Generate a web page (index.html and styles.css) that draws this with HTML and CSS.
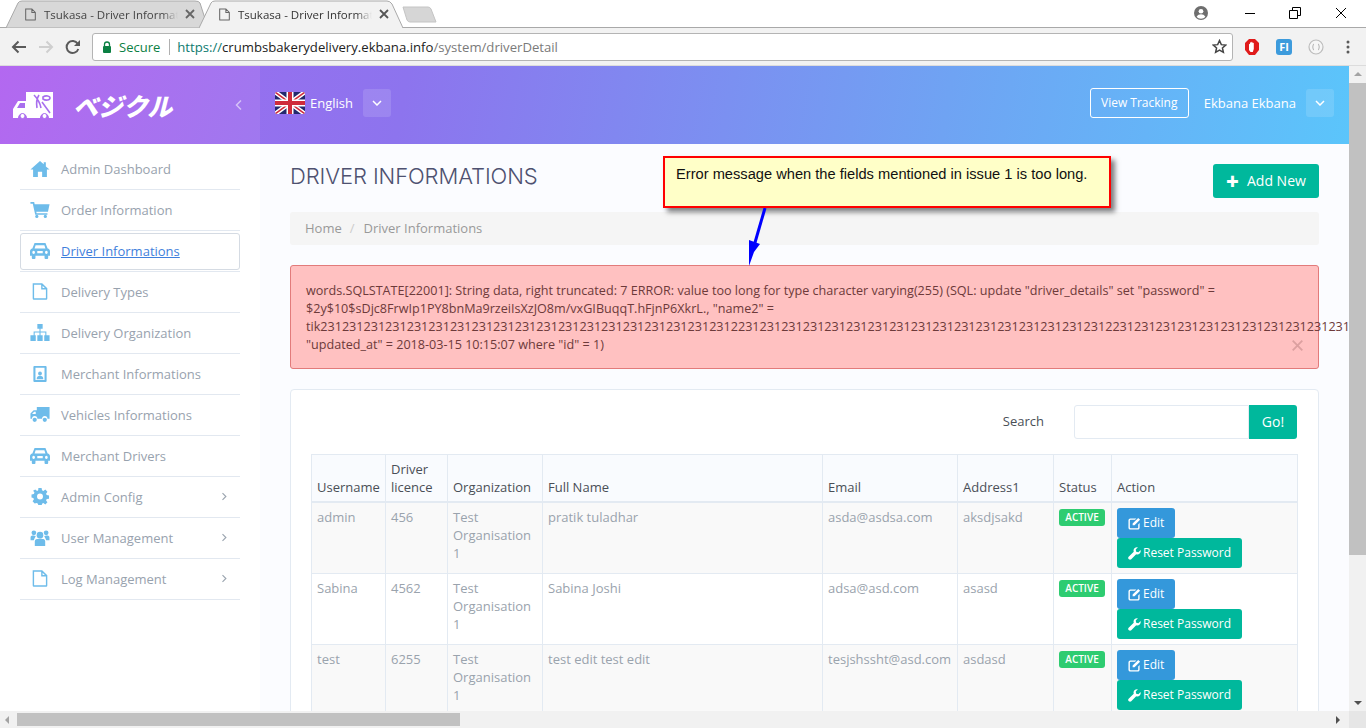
FILE: index.html
```html
<!DOCTYPE html>
<html lang="en">
<head>
    <meta charset="UTF-8">
    <title>Tsukasa - Driver Informations</title>
    <link rel="stylesheet" href="styles.css">
</head>
<body>
<svg class="defs" width="0" height="0">
    <symbol id="i-file" viewBox="0 0 16 18"><path d="M1 1h9l5 5v10.500a.5.5 0 0 1-.5.5H1.500a.5.5 0 0 1-.5-.5z M10 1v5h5" fill="none" stroke="currentColor" stroke-width="1.500"/></symbol>
    <symbol id="i-car" viewBox="0 0 22 16" preserveAspectRatio="none"><path d="M5 1h12l2.400 5c1.600.3 2.600 1.200 2.600 2.600V13h-2v2a1 1 0 0 1-1 1h-2a1 1 0 0 1-1-1v-2H6v2a1 1 0 0 1-1 1H3a1 1 0 0 1-1-1v-2H0V8.600C0 7.200 1 6.300 2.600 6zM6.200 3L5 6h12l-1.200-3zM4 8.200a1.500 1.500 0 1 0 0 3 1.500 1.500 0 0 0 0-3zm14 0a1.500 1.500 0 1 0 0 3 1.500 1.500 0 0 0 0-3zM8 8.500v2h6v-2z" fill="currentColor" fill-rule="evenodd"/></symbol>
    <symbol id="i-chev" viewBox="0 0 8 12"><path d="M2 1.500L6.500 6 2 10.500" fill="none" stroke="currentColor" stroke-width="1.500"/></symbol>
    <symbol id="i-edit" viewBox="0 0 14 14"><path d="M2.500 1.500H9L7.500 3H2.800C2.300 3 2 3.300 2 3.800v7.400c0 .5.300.8.800.8h7.400c.5 0 .8-.3.800-.8V8l1.500-1.500v5c0 1-.9 2-2 2h-8c-1.100 0-2-1-2-2v-8c0-1.100.9-2 2-2z M11 1l2 2-6 6H5V7z" fill="currentColor"/></symbol>
    <symbol id="i-wrench" viewBox="0 0 14 14"><path d="M13.600 3.300c.3 1.400-.1 2.800-1 3.700-1 1-2.500 1.300-3.800.8L3.500 13.300c-.7.700-1.800.7-2.500 0l-.3-.3c-.7-.7-.7-1.800 0-2.500l5.500-5.300C5.700 3.900 6 2.400 7 1.400 8 .4 9.400 0 10.700.4L8.300 2.800l.5 2.400 2.400.5z" fill="currentColor"/></symbol>
</svg>

<div class="tabstrip">
    <div class="tab">
        <svg class="tab-shape" viewBox="0 0 204 28"><path d="M1 28 L13 3 Q14 1 17 1 H190 Q194 1 195 3 L203 28 Z" fill="#d8d8d8" stroke="#a9a9a9"/></svg>
        <svg class="tab-file"><use href="#i-file"/></svg>
        <span class="tab-title">Tsukasa - Driver Informat</span>
        <svg class="tab-x" width="10" height="10" viewBox="0 0 10 10"><path d="M1 1l8 8M9 1L1 9" stroke="#666" stroke-width="1.800"/></svg>
    </div>
    <div class="tab tab-on">
        <svg class="tab-shape" viewBox="0 0 204 28"><path d="M0 28 L12 3 Q13 1 16 1 H188 Q191 1 193 4 L204 28" fill="#f2f2f2" stroke="#a9a9a9"/></svg>
        <svg class="tab-file"><use href="#i-file"/></svg>
        <span class="tab-title">Tsukasa - Driver Informat</span>
        <svg class="tab-x" width="10" height="10" viewBox="0 0 10 10"><path d="M1 1l8 8M9 1L1 9" stroke="#555" stroke-width="1.800"/></svg>
    </div>
    <svg class="tab-new" width="36" height="18" viewBox="0 0 36 18"><path d="M2 1 H27 Q29 1 30 3 L35 16 H9 Q7 16 6 14z" fill="#d6d6d6" stroke="#c4c4c4"/></svg>
    <div class="win-btns">
        <svg class="win-user" width="14" height="14" viewBox="0 0 16 16"><circle cx="8" cy="8" r="8" fill="#6e6e6e"/><circle cx="8" cy="6" r="2.700" fill="#fff"/><path d="M3 12.200c1-2 3-2.900 5-2.900s4 .9 5 2.900c-1 1.300-3 2.300-5 2.300s-4-1-5-2.300z" fill="#fff"/></svg>
        <svg width="12" height="12" viewBox="0 0 12 12" class="win-min"><path d="M1 6.500h10" stroke="#000"/></svg>
        <svg width="12" height="12" viewBox="0 0 12 12" class="win-max"><path d="M.5 3.500h8v8h-8zM3.500 3V.5h8v8H9" fill="none" stroke="#000"/></svg>
        <svg width="12" height="12" viewBox="0 0 12 12" class="win-close"><path d="M1 1l10 10M11 1L1 11" stroke="#000"/></svg>
    </div>
</div>

<div class="toolbar">
    <svg class="nav" width="16" height="14" viewBox="0 0 16 14"><path d="M15 7H2M7.500 1.500L2 7l5.500 5.500" fill="none" stroke="#5a5a5a" stroke-width="2"/></svg>
    <svg class="nav" width="16" height="14" viewBox="0 0 16 14"><path d="M1 7h13M8.500 1.500L14 7l-5.500 5.500" fill="none" stroke="#cfcfcf" stroke-width="2"/></svg>
    <svg class="nav" width="16" height="16" viewBox="0 0 16 16"><path d="M13.300 10a6 6 0 1 1-.6-5.200" fill="none" stroke="#5a5a5a" stroke-width="2"/><path d="M15 1v6H9z" fill="#5a5a5a"/></svg>
    <div class="omnibox">
        <svg class="lock" width="10" height="12" viewBox="0 0 10 12"><path d="M2.500 5V3.500a2.500 2.500 0 0 1 5 0V5" fill="none" stroke="#0b8043" stroke-width="1.300"/><rect x="1" y="5" width="8" height="7" rx="1" fill="#0b8043"/></svg>
        <span class="secure">Secure</span>
        <span class="omni-sep"></span>
        <span class="url"><span class="url-scheme">https://</span>crumbsbakerydelivery.ekbana.info<span class="url-path">/system/driverDetail</span></span>
        <svg class="star" width="15" height="15" viewBox="0 0 24 24"><path d="M12 2.500l2.900 6.500 7.100.7-5.300 4.700 1.500 7-6.200-3.600-6.200 3.600 1.500-7L2 9.700 9.100 9z" fill="none" stroke="#444" stroke-width="2.400"/></svg>
    </div>
    <div class="exts">
        <svg width="16" height="18" viewBox="0 0 16 18"><path d="M5 1h6l4 4v7l-4 5H5l-4-5V5z" fill="#e01b1b"/><path d="M5 12V6.500c0-1 1-1 1-.2V5c0-1 1.200-1 1.200 0V4.500c0-.9 1.300-.9 1.300 0V5.300c0-.8 1.300-.8 1.300 0V11l-1 3H6.500z" fill="#fff"/></svg>
        <span class="ext-fi">FI</span>
        <svg width="16" height="16" viewBox="0 0 16 16"><circle cx="8" cy="8" r="7" fill="#f6f6f6" stroke="#bdbdbd" stroke-width="1.200"/><path d="M6 5C4.800 5 5.400 7.500 4.500 8c.9.500.3 3 1.500 3M10 5c1.200 0 .6 2.500 1.500 3-.9.500-.3 3-1.500 3" fill="none" stroke="#aaa"/></svg>
        <svg class="ext-menu" width="4" height="14" viewBox="0 0 4 14"><circle cx="2" cy="2" r="1.500" fill="#5a5a5a"/><circle cx="2" cy="7" r="1.500" fill="#5a5a5a"/><circle cx="2" cy="12" r="1.500" fill="#5a5a5a"/></svg>
    </div>
</div>

<div class="viewport">
    <div class="page-row">
        <div class="page">
            <header class="topbar">
                <div class="brand">
                    <svg width="42" height="28" viewBox="0 0 42 28"><path d="M14 1h27v26H37a4.500 4.500 0 0 0-9 0H15a4.500 4.500 0 0 0-9 0H1v-9l5-8h8z" fill="#fff"/><path d="M5 17l3-5h5v5z" fill="#a86fee"/><path d="M22 4c3 3 6 8 7 13M27 4c-2 3-3 7-2 13M31 6c3-2 7-1 7 1s-4 3-7 1zM30 11l8 11" fill="none" stroke="#a86fee" stroke-width="1.600"/><circle cx="10.500" cy="25" r="2.500" fill="#fff" stroke="#a86fee"/><circle cx="32.500" cy="25" r="2.500" fill="#fff" stroke="#a86fee"/></svg>
                    <span class="brand-name">ベジクル</span>
                    <svg class="brand-fold" width="8" height="12"><use href="#i-chev" transform="matrix(-1 0 0 1 8 0)"/></svg>
                </div>
                <div class="topbar-main">
                    <svg class="flag" width="30" height="22" viewBox="0 0 60 44">
                        <rect width="60" height="44" rx="3" fill="#23286e"/>
                        <path d="M0 0L60 44M60 0L0 44" stroke="#fff" stroke-width="9"/>
                        <path d="M0 0L60 44M60 0L0 44" stroke="#cf2b3b" stroke-width="3"/>
                        <path d="M30 0v44M0 22h60" stroke="#fff" stroke-width="14"/>
                        <path d="M30 0v44M0 22h60" stroke="#cf2b3b" stroke-width="8"/>
                    </svg>
                    <span class="lang">English</span>
                    <span class="caret-box"><svg width="10" height="6" viewBox="0 0 10 6"><path d="M1 1l4 4 4-4" fill="none" stroke="#fff" stroke-width="1.500"/></svg></span>
                    <a class="track-btn">View Tracking</a>
                    <span class="user-name">Ekbana Ekbana</span>
                    <span class="caret-box"><svg width="10" height="6" viewBox="0 0 10 6"><path d="M1 1l4 4 4-4" fill="none" stroke="#fff" stroke-width="1.500"/></svg></span>
                </div>
            </header>

            <div class="content">
                <nav class="sidebar">
                    <a class="side-item"><svg class="side-icon" viewBox="0 0 18 16"><path d="M9 1l3.500 3V2h2v4L18 9h-2.500v7H11v-5H7v5H2.500V9H0z" fill="currentColor"/></svg>Admin Dashboard</a>
                    <a class="side-item"><svg class="side-icon" viewBox="0 0 18 16"><path d="M0 1h3.500l.5 2h14l-1.500 7H5.500l.3 1.500H16V13H4.500L2.200 2.500H0z" fill="currentColor"/><circle cx="6" cy="14.500" r="1.500" fill="currentColor"/><circle cx="14" cy="14.500" r="1.500" fill="currentColor"/></svg>Order Information</a>
                    <a class="side-item is-active"><span class="side-box"><svg class="side-icon"><use href="#i-car"/></svg><span class="side-link">Driver Informations</span></span></a>
                    <a class="side-item"><svg class="side-icon"><use href="#i-file"/></svg>Delivery Types</a>
                    <a class="side-item"><svg class="side-icon" viewBox="0 0 18 16"><path d="M6.500 0h5v4.500h-2V7H15v3.500h3V16h-5v-5.500h1V8H9.500v2.500H11.500V16h-5v-5.500h2V8H4v2.500h1V16H0v-5.500h3V7h5.500V4.500h-2z" fill="currentColor"/></svg>Delivery Organization</a>
                    <a class="side-item"><svg class="side-icon" viewBox="0 0 18 18"><path d="M3 1h12a1 1 0 0 1 1 1v15a1 1 0 0 1-1 1H3a1 1 0 0 1-1-1V2a1 1 0 0 1 1-1zm1.200 2v13h9.600V3z" fill="currentColor" fill-rule="evenodd"/><circle cx="9" cy="9" r="2" fill="currentColor"/><path d="M5.500 15c0-2.500 1.500-3.500 3.500-3.500s3.500 1 3.500 3.500z" fill="currentColor"/></svg>Merchant Informations</a>
                    <a class="side-item"><svg class="side-icon" viewBox="0 0 18 16"><path d="M6 1h12v11h-2a2.500 2.500 0 0 0-5 0H6.500a2.500 2.500 0 0 0-5 0H0V7l3-3h3zM1.500 7.500H5V5.300H3.500z" fill="currentColor" fill-rule="evenodd"/><circle cx="4" cy="13" r="2" fill="currentColor"/><circle cx="13.500" cy="13" r="2" fill="currentColor"/></svg>Vehicles Informations</a>
                    <a class="side-item"><svg class="side-icon"><use href="#i-car"/></svg>Merchant Drivers</a>
                    <a class="side-item"><svg class="side-icon" viewBox="0 0 16 16"><path fill-rule="evenodd" fill="currentColor" d="M6.500 0h3l.4 2.200 1.300.6L13 1.500l2 2-1.300 1.800.6 1.300 2.200.4v3l-2.200.4-.6 1.300 1.300 1.800-2 2-1.800-1.300-1.300.6-.4 2.200h-3l-.4-2.200-1.300-.6L3 14.500l-2-2 1.300-1.800-.6-1.300L0 9V6l2.200-.4.600-1.300L1.500 2.500l2-1 1.800 1.300 1-.6zM8 5.200a2.800 2.800 0 1 0 0 5.600 2.800 2.800 0 0 0 0-5.600z"/></svg>Admin Config<svg class="side-chev"><use href="#i-chev"/></svg></a>
                    <a class="side-item"><svg class="side-icon" viewBox="0 0 20 18"><circle cx="10" cy="6.500" r="3.500" fill="currentColor"/><circle cx="3.500" cy="4" r="2.500" fill="currentColor"/><circle cx="16.500" cy="4" r="2.500" fill="currentColor"/><path d="M4.500 18v-5c0-2 1.500-2.800 5.500-2.800s5.500.8 5.500 2.800v5zM0 12V9c0-1.500 1-2 3-2l2.500.5C5 9 4 10 3.500 12zM20 12V9c0-1.500-1-2-3-2l-2.500.5c.5 1.500 1.500 2.500 2 4.500z" fill="currentColor"/></svg>User Management<svg class="side-chev"><use href="#i-chev"/></svg></a>
                    <a class="side-item"><svg class="side-icon"><use href="#i-file"/></svg>Log Management<svg class="side-chev"><use href="#i-chev"/></svg></a>
                </nav>

                <main class="main">
                    <div class="page-head">
                        <h1 class="page-title">DRIVER INFORMATIONS</h1>
                        <a class="add-btn"><span class="add-plus">+</span>Add New</a>
                    </div>
                    <div class="crumbs">Home<span class="crumb-sep">/</span>Driver Informations</div>
                    <div class="alert">
                        words.SQLSTATE[22001]: String data, right truncated: 7 ERROR: value too long for type character varying(255) (SQL: update "driver_details" set "password" =<br>
                        $2y$10$sDjc8FrwIp1PY8bnMa9rzeiIsXzJO8m/vxGIBuqqT.hFjnP6XkrL., "name2" =<br>
                        <span class="alert-long">tik2312312312312312312312312312312312312312312312312312312312231231231231231231231231231231231231231231231231231223123123123123123123123123123123123</span><br>
                        "updated_at" = 2018-03-15 10:15:07 where "id" = 1)
                        <svg class="alert-x" width="11" height="11" viewBox="0 0 11 11"><path d="M.7.7l9.600 9.600M10.300.7L.7 10.300" stroke="#dca0a0" stroke-width="1.800"/></svg>
                    </div>
                    <section class="panel">
                        <div class="search-row">
                            <label class="search-label">Search</label>
                            <input class="search-input" type="text">
                            <a class="search-go">Go!</a>
                        </div>
                        <table class="grid">
                            <colgroup><col class="c1"><col class="c2"><col class="c3"><col class="c4"><col class="c5"><col class="c6"><col class="c7"><col class="c8"></colgroup>
                            <thead>
                                <tr><th>Username</th><th>Driver licence</th><th>Organization</th><th>Full Name</th><th>Email</th><th>Address1</th><th>Status</th><th>Action</th></tr>
                            </thead>
                            <tbody>
                                <tr>
                                    <td>admin</td><td>456</td><td>Test Organisation 1</td><td>pratik tuladhar</td><td>asda@asdsa.com</td><td>aksdjsakd</td>
                                    <td><span class="badge">ACTIVE</span></td>
                                    <td><a class="btn btn-edit"><svg><use href="#i-edit"/></svg>Edit</a><a class="btn btn-reset"><svg><use href="#i-wrench"/></svg>Reset Password</a></td>
                                </tr>
                                <tr>
                                    <td>Sabina</td><td>4562</td><td>Test Organisation 1</td><td>Sabina Joshi</td><td>adsa@asd.com</td><td>asasd</td>
                                    <td><span class="badge">ACTIVE</span></td>
                                    <td><a class="btn btn-edit"><svg><use href="#i-edit"/></svg>Edit</a><a class="btn btn-reset"><svg><use href="#i-wrench"/></svg>Reset Password</a></td>
                                </tr>
                                <tr>
                                    <td>test</td><td>6255</td><td>Test Organisation 1</td><td>test edit test edit</td><td>tesjshssht@asd.com</td><td>asdasd</td>
                                    <td><span class="badge">ACTIVE</span></td>
                                    <td><a class="btn btn-edit"><svg><use href="#i-edit"/></svg>Edit</a><a class="btn btn-reset"><svg><use href="#i-wrench"/></svg>Reset Password</a></td>
                                </tr>
                            </tbody>
                        </table>
                    </section>
                </main>
            </div>

            <div class="callout">Error message when the fields mentioned in issue 1 is too long.</div>
            <svg class="callout-arrow" width="24" height="60" viewBox="0 0 24 60"><path d="M20 0L9 38" stroke="#0000ff" stroke-width="3" fill="none"/><path d="M4 32L15 36 9 44 4 58z" fill="#0000ff"/></svg>
        </div>
        <div class="vscroll">
            <span class="arr-up"></span>
            <span class="vthumb"></span>
            <span class="arr-down"></span>
        </div>
    </div>
    <div class="hscroll">
        <span class="arr-left"></span>
        <div class="htrack"><span class="hthumb"></span></div>
        <span class="arr-right"></span>
        <span class="corner"></span>
    </div>
</div>
</body>
</html>
```

FILE: styles.css
```css
*{
    margin:0;
    padding:0;
    box-sizing:border-box;
}
html,body{
    height:100%;
    overflow:hidden;
}
body{
    display:flex;
    flex-direction:column;
    font-family:"Open Sans","Noto Sans CJK JP",sans-serif;
    font-size:13px;
    background:#fff;
}
.defs{
    position:absolute;
}

/* browser chrome */
.tabstrip{
    height:28px;
    display:flex;
    align-items:flex-end;
    padding-left:5px;
    background:#fff;
    border-bottom:1px solid #a9a9a9;
    font-family:"Open Sans",sans-serif;
    flex:none;
}
.tab{
    position:relative;
    width:204px;
    height:28px;
    margin-right:-10px;
    margin-bottom:-1px;
    display:flex;
    align-items:center;
    padding-left:20px;
    font-size:11.5px;
    color:#444;
}
.tab-on{
    color:#333;
}
.tab-shape{
    position:absolute;
    left:0;
    top:0;
    width:204px;
    height:28px;
}
.tab-file{
    position:relative;
    width:11px;
    height:13px;
    color:#666;
    margin-right:8px;
    flex:none;
}
.tab-title{
    position:relative;
    width:134px;
    overflow:hidden;
    white-space:nowrap;
    -webkit-mask-image:linear-gradient(90deg,#000 88%,transparent);
    mask-image:linear-gradient(90deg,#000 88%,transparent);
}
.tab-x{
    position:relative;
    margin-left:7px;
}
.tab-new{
    margin-left:8px;
    margin-bottom:3px;
}
.win-btns{
    margin-left:auto;
    height:27px;
    display:flex;
    align-items:center;
    padding-right:19px;
    padding-bottom:1px;
}
.win-user{
    margin-right:36px;
}
.win-min{
    margin-right:33px;
}
.win-max{
    margin-right:34px;
}
.toolbar{
    height:38px;
    background:#f2f2f2;
    display:flex;
    align-items:center;
    padding-left:11px;
    flex:none;
    border-bottom:1px solid #dcdcdc;
}
.nav{
    margin-right:11px;
    flex:none;
}
.omnibox{
    width:1141px;
    height:28px;
    background:#fff;
    border:1px solid #b4b4b4;
    border-radius:3px;
    display:flex;
    align-items:center;
    padding-left:9px;
    font-size:13px;
    flex:none;
}
.lock{
    margin-right:7px;
}
.secure{
    color:#0b8043;
}
.omni-sep{
    width:1px;
    height:16px;
    background:#b0b0b0;
    margin:0 7px 0 9px;
}
.url{
    color:#222;
    font-size:13.15px;
    white-space:nowrap;
}
.url-scheme{
    color:#0b7a6e;
}
.url-path{
    color:#7a7a7a;
}
.star{
    margin-left:auto;
    margin-right:5px;
}
.exts{
    display:flex;
    align-items:center;
    gap:16px;
    margin-left:11px;
}
.ext-fi{
    width:16px;
    height:16px;
    background:#3d9bdc;
    border-radius:3px;
    color:#fff;
    font-size:11px;
    font-weight:700;
    line-height:16px;
    text-align:center;
}
.ext-menu{
    margin-left:6px;
}

/* viewport with fake scrollbars */
.viewport{
    flex:1;
    min-height:0;
    display:flex;
    flex-direction:column;
}
.page-row{
    flex:1;
    min-height:0;
    display:flex;
}
.page{
    position:relative;
    flex:1;
    min-width:0;
    overflow:hidden;
    display:flex;
    flex-direction:column;
}
.vscroll{
    width:17px;
    background:#f1f1f1;
    display:flex;
    flex-direction:column;
    align-items:center;
    flex:none;
}
.arr-up,.arr-down{
    width:0;
    height:0;
    border-left:4px solid transparent;
    border-right:4px solid transparent;
    margin:6px 0;
}
.arr-up{
    border-bottom:4px solid #a3a3a3;
}
.arr-down{
    border-top:4px solid #505050;
    margin-top:auto;
}
.vthumb{
    width:100%;
    height:472px;
    background:#c1c1c1;
    margin-top:1px;
}
.hscroll{
    height:17px;
    background:#f1f1f1;
    display:flex;
    align-items:center;
    flex:none;
}
.arr-left,.arr-right{
    width:0;
    height:0;
    border-top:4px solid transparent;
    border-bottom:4px solid transparent;
    margin:0 5px;
}
.arr-left{
    border-right:4px solid #a3a3a3;
}
.arr-right{
    border-left:4px solid #505050;
    margin-right:9px;
}
.htrack{
    flex:1;
    height:17px;
    padding:2px 0;
}
.hthumb{
    display:block;
    width:443px;
    height:13px;
    background:#c1c1c1;
    margin-left:3px;
}
.corner{
    width:17px;
    height:17px;
    background:#e6e6e6;
}

/* app header */
.topbar{
    height:78px;
    display:flex;
    flex:none;
    color:#fff;
    background:linear-gradient(100deg,#a16af0 0%,#8d74ee 30%,#6fa3f3 70%,#5bc5fb 100%);
}
.brand{
    width:260px;
    display:flex;
    align-items:center;
    padding-left:12px;
    background:linear-gradient(110deg,#b368f0,#a078ef);
}
.brand-name{
    font-family:"Noto Sans CJK JP",sans-serif;
    font-weight:900;
    font-size:25px;
    font-style:italic;
    margin-left:19px;
}
.brand-fold{
    margin-left:auto;
    margin-right:17px;
    opacity:.55;
}
.topbar-main{
    flex:1;
    display:flex;
    align-items:center;
    padding:0 15px 4px 15px;
}
.flag{
    margin-right:5px;
    border-radius:2px;
}
.lang{
    margin-right:10px;
}
.caret-box{
    width:28px;
    height:28px;
    border-radius:3px;
    background:rgba(255,255,255,.13);
    display:flex;
    align-items:center;
    justify-content:center;
}
.track-btn{
    margin-left:auto;
    width:99px;
    height:30px;
    border:1px solid #fff;
    border-radius:3px;
    font-size:12px;
    line-height:27px;
    text-align:center;
    margin-right:15px;
}
.user-name{
    margin-right:10px;
}

/* sidebar */
.content{
    flex:1;
    min-height:0;
    display:flex;
}
.sidebar{
    width:260px;
    flex:none;
    background:#fff;
    padding:5px 20px 0;
}
.side-item{
    height:41px;
    display:flex;
    align-items:center;
    border-bottom:1px solid #e2e8f0;
    color:#98a2ae;
    font-size:13px;
    white-space:nowrap;
    padding-right:13px;
    padding-bottom:1px;
}
.side-icon{
    width:20px;
    height:17px;
    margin:0 11px 0 10px;
    color:#6ebcea;
    flex:none;
}
.side-chev{
    width:6px;
    height:9px;
    margin-left:auto;
    color:#9aa4af;
}
.side-item.is-active{
    align-items:stretch;
    padding:2px 0 1px;
}
.side-box{
    flex:1;
    display:flex;
    align-items:center;
    border:1px solid #d5dbe3;
    border-radius:3px;
    padding-bottom:2px;
}
.is-active .side-icon{
    margin-left:9px;
    margin-right:11px;
}
.side-link{
    color:#3f7fdc;
    text-decoration:underline;
}

/* main column */
.main{
    flex:1;
    min-width:0;
    background:#fbfcff;
    padding:20px 30px 0;
    display:flex;
    flex-direction:column;
}
.page-head{
    display:flex;
    align-items:flex-start;
    justify-content:space-between;
    height:34px;
    margin-bottom:14px;
}
.page-title{
    font-family:"Inter",sans-serif;
    font-size:22px;
    line-height:24px;
    font-weight:300;
    letter-spacing:-.1px;
    color:#4e5170;
}
.add-btn{
    width:106px;
    height:34px;
    background:#00b89c;
    border-radius:3px;
    color:#fff;
    font-size:14px;
    display:flex;
    align-items:center;
    justify-content:center;
    padding-bottom:1px;
}
.add-plus{
    font-size:22px;
    font-weight:800;
    margin-right:8px;
    line-height:1;
}
.crumbs{
    height:33px;
    background:#f5f5f5;
    border-radius:3px;
    color:#999;
    line-height:33px;
    padding-left:15px;
    flex:none;
}
.crumb-sep{
    color:#ccc;
    margin:0 9px 0 8px;
}
.alert{
    position:relative;
    margin-top:20px;
    height:104px;
    flex:none;
    background:#ffc1c1;
    border:1px solid #e27b7b;
    border-radius:3px;
    padding:16px 15px 0;
    color:#6d3a3a;
    font-size:12.6px;
    line-height:18px;
    white-space:nowrap;
}
.alert-x{
    position:absolute;
    right:15px;
    bottom:17px;
}
.panel{
    margin-top:20px;
    background:#fff;
    border:1px solid #e3eaf2;
    border-radius:4px 4px 0 0;
    padding:15px 20px 0;
    flex:none;
}
.search-row{
    display:flex;
    align-items:center;
    justify-content:flex-end;
    height:34px;
    margin-bottom:15px;
    padding-right:1px;
}
.search-label{
    color:#4a4f57;
    margin-right:30px;
    font-size:13px;
    padding-bottom:2px;
}
.search-input{
    width:175px;
    height:34px;
    border:1px solid #e3eaf2;
    border-radius:3px 0 0 3px;
    background:#fff;
}
.search-go{
    width:48px;
    height:34px;
    background:#00b89c;
    color:#fff;
    font-size:14px;
    line-height:34px;
    text-align:center;
    border-radius:0 3px 3px 0;
}

/* table */
.grid{
    width:986px;
    table-layout:fixed;
    border-collapse:collapse;
    color:#9aa3ad;
    font-size:13px;
}
.c1{width:74px}
.c2{width:62px}
.c3{width:95px}
.c4{width:280px}
.c5{width:135px}
.c6{width:96px}
.c7{width:58px}
.c8{width:186px}
.grid th,.grid td{
    border:1px solid #e3eaf2;
    padding:5px 5px 5px;
    text-align:left;
    vertical-align:top;
    line-height:18px;
}
.grid th{
    vertical-align:bottom;
    font-weight:400;
    color:#4a4f57;
    background:#f9fbfe;
    border-bottom-width:2px;
}
.grid tbody tr:nth-child(odd){
    background:#f9f9f9;
}
.grid tbody tr:nth-child(even){
    background:#fff;
}
.badge{
    display:block;
    width:46px;
    height:17px;
    margin-top:1px;
    background:#2ecc71;
    border-radius:3px;
    color:#fff;
    font-size:10px;
    font-weight:600;
    line-height:17px;
    text-align:center;
}
.btn{
    display:flex;
    align-items:center;
    height:30px;
    border-radius:3px;
    color:#fff;
    font-size:12px;
    padding-left:11px;
}
.btn svg{
    width:13px;
    height:13px;
    margin-right:2px;
    flex:none;
}
.btn-edit{
    width:58px;
    background:#3498db;
}
.btn-reset{
    width:125px;
    background:#00b89c;
}

/* annotation over the screenshot */
.callout{
    position:absolute;
    left:663px;
    top:90px;
    width:448px;
    height:52px;
    background:#ffffc8;
    border:2px solid #f00;
    box-shadow:4px 4px 5px rgba(0,0,0,.5);
    font-family:"Liberation Sans",sans-serif;
    font-size:14.67px;
    color:#111;
    padding:8px 11px;
}
.callout-arrow{
    position:absolute;
    left:745px;
    top:142px;
}
```
